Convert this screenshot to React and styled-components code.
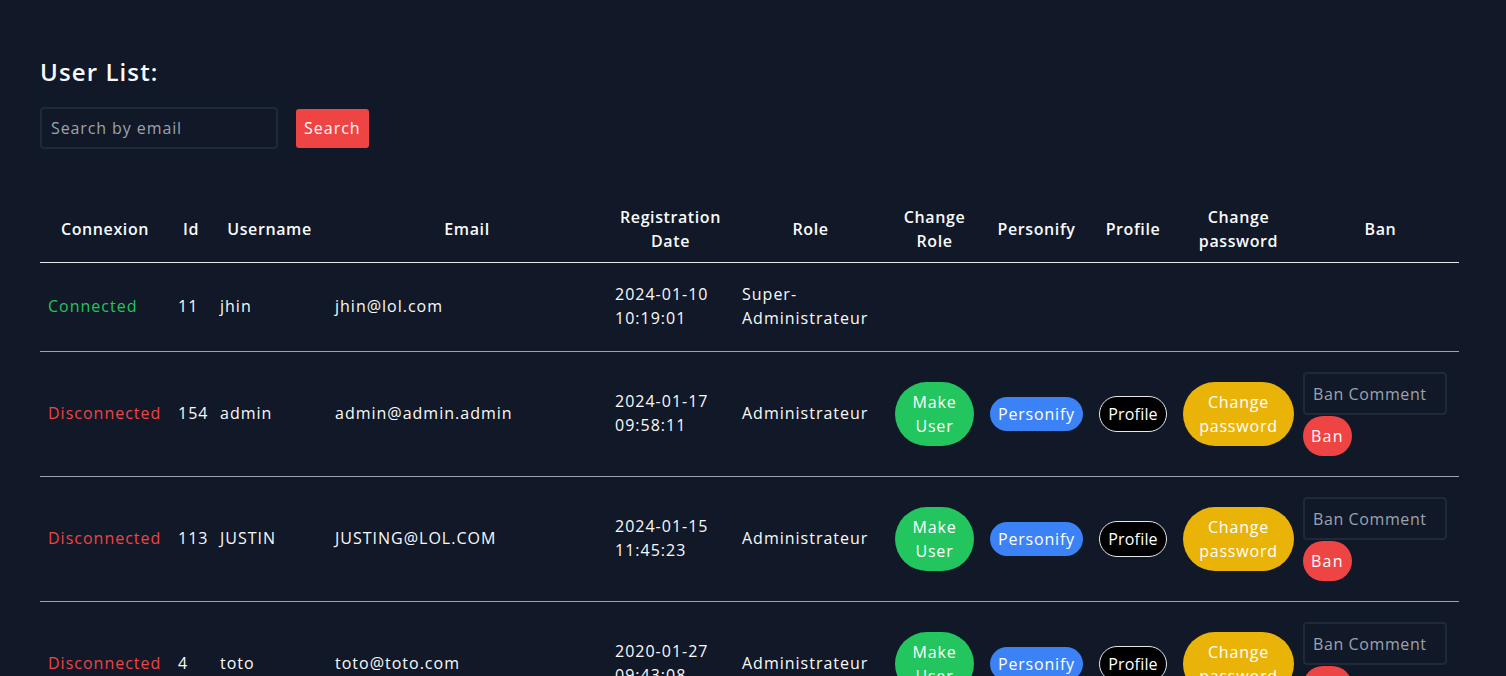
import styled, { createGlobalStyle } from "styled-components";

const users = [
  { id: 11, username: "jhin", email: "jhin@lol.com", registered: "2024-01-10 10:19:01", role: "Super-Administrateur", connected: true, locked: true },
  { id: 154, username: "admin", email: "admin@admin.admin", registered: "2024-01-17 09:58:11", role: "Administrateur", connected: false },
  { id: 113, username: "JUSTIN", email: "JUSTING@LOL.COM", registered: "2024-01-15 11:45:23", role: "Administrateur", connected: false },
  { id: 4, username: "toto", email: "toto@toto.com", registered: "2020-01-27 09:43:08", role: "Administrateur", connected: false },
];

const columns = [
  { label: "Connexion", width: 130 },
  { label: "Id", width: 42 },
  { label: "Username", width: 115 },
  { label: "Email", width: 280 },
  { label: "Registration Date", width: 127 },
  { label: "Role", width: 153 },
  { label: "Change Role", width: 95 },
  { label: "Personify", width: 109 },
  { label: "Profile", width: 84 },
  { label: "Change password", width: 127 },
  { label: "Ban", width: 157 },
];

export default function App() {
  return (
    <>
      <GlobalStyle />
      <Page>
        <Title>User List:</Title>
        <SearchBar>
          <SearchInput placeholder="Search by email" />
          <SearchButton>Search</SearchButton>
        </SearchBar>

        <Table>
          <colgroup>
            {columns.map((c) => (
              <col key={c.label} style={{ width: c.width }} />
            ))}
          </colgroup>
          <thead>
            <tr>
              {columns.map((c) => (
                <Th key={c.label}>{c.label}</Th>
              ))}
            </tr>
          </thead>
          <tbody>
            {users.map((u) => (
              <Row key={u.id}>
                <Td>
                  <Status $connected={u.connected}>
                    {u.connected ? "Connected" : "Disconnected"}
                  </Status>
                </Td>
                <Td>{u.id}</Td>
                <Td>{u.username}</Td>
                <Td>{u.email}</Td>
                <Td>{u.registered}</Td>
                <Td>{u.role}</Td>
                {u.locked ? (
                  <>
                    <Td />
                    <Td />
                    <Td />
                    <Td />
                    <Td />
                  </>
                ) : (
                  <>
                    <ActionTd>
                      <Pill $variant="green">Make User</Pill>
                    </ActionTd>
                    <ActionTd>
                      <Pill $variant="blue">Personify</Pill>
                    </ActionTd>
                    <ActionTd>
                      <Pill $variant="outline">Profile</Pill>
                    </ActionTd>
                    <ActionTd>
                      <Pill $variant="yellow">Change password</Pill>
                    </ActionTd>
                    <BanTd>
                      <BanBox>
                        <BanInput placeholder="Ban Comment" />
                        <Pill $variant="red">Ban</Pill>
                      </BanBox>
                    </BanTd>
                  </>
                )}
              </Row>
            ))}
          </tbody>
        </Table>
      </Page>
    </>
  );
}

const GlobalStyle = createGlobalStyle`
  html, body {
    margin: 0;
    background: #111827;
    overflow: hidden;
  }
  body {
    font-family: "Open Sans", "DejaVu Sans", sans-serif;
    color: #f9fafb;
  }
`;

const Page = styled.div`
  padding: 56px 0 40px 40px;
`;

const Title = styled.h2`
  margin: 0 0 19px;
  font-size: 24px;
  line-height: 32px;
  font-weight: 600;
  letter-spacing: 1.1px;
`;

const SearchBar = styled.div`
  display: flex;
  align-items: center;
  gap: 18px;
`;

const SearchInput = styled.input`
  box-sizing: border-box;
  width: 238px;
  height: 42px;
  padding: 0 9px;
  background: transparent;
  border: 2px solid #1f2937;
  border-radius: 4px;
  color: #f9fafb;
  font: inherit;
  font-size: 16px;
  letter-spacing: 0.9px;
  outline: none;

  &::placeholder {
    color: #9ca3af;
  }
`;

const SearchButton = styled.button`
  height: 39px;
  padding: 0 8px;
  border: none;
  border-radius: 3px;
  background: #ef4444;
  color: #fff;
  font: inherit;
  font-size: 16px;
  letter-spacing: 1px;
`;

const Table = styled.table`
  width: 1419px;
  margin-top: 45px;
  table-layout: fixed;
  border-collapse: collapse;
  font-size: 16px;
  line-height: 24px;
  letter-spacing: 1px;
`;

const Th = styled.th`
  padding: 11px 8px 9px;
  font-weight: 600;
  letter-spacing: 0.6px;
  text-align: center;
  vertical-align: middle;
  border-bottom: 1px solid #e5e7eb;
`;

const Row = styled.tr`
  border-bottom: 1px solid #9ca3af;
`;

const Td = styled.td`
  padding: 19px 8px 21px;
  text-align: left;
  vertical-align: middle;
`;

const ActionTd = styled(Td)`
  padding: 20px 8px;
  text-align: center;
`;

const BanTd = styled(Td)`
  padding: 20px 8px 20px 1px;
`;

const Status = styled.span`
  color: ${(p) => (p.$connected ? "#22c55e" : "#ef4444")};
`;

const pillColors = {
  green: { bg: "#22c55e", pad: "8px", spacing: "0.8px" },
  blue: { bg: "#3b82f6", pad: "5px", spacing: "0.8px" },
  outline: { bg: "#000", pad: "5px", spacing: "0.2px" },
  yellow: { bg: "#eab308", pad: "8px", spacing: "0.8px" },
  red: { bg: "#ef4444", pad: "8px", spacing: "1.2px" },
};

const Pill = styled.button`
  display: inline-block;
  padding: ${(p) => pillColors[p.$variant].pad} 8px;
  border: ${(p) => (p.$variant === "outline" ? "1px solid #e5e7eb" : "none")};
  border-radius: 9999px;
  background: ${(p) => pillColors[p.$variant].bg};
  color: #fff;
  font: inherit;
  line-height: 24px;
  letter-spacing: ${(p) => pillColors[p.$variant].spacing};
  text-align: center;
  vertical-align: middle;
`;

const BanBox = styled.div`
  display: flex;
  flex-direction: column;
  align-items: flex-start;
  gap: 1px;
`;

const BanInput = styled.input`
  box-sizing: border-box;
  width: 144px;
  height: 43px;
  padding: 0 8px;
  background: transparent;
  border: 2px solid #1f2937;
  border-radius: 4px;
  color: #f9fafb;
  font: inherit;
  letter-spacing: 0.6px;
  outline: none;

  &::placeholder {
    color: #9ca3af;
  }
`;
